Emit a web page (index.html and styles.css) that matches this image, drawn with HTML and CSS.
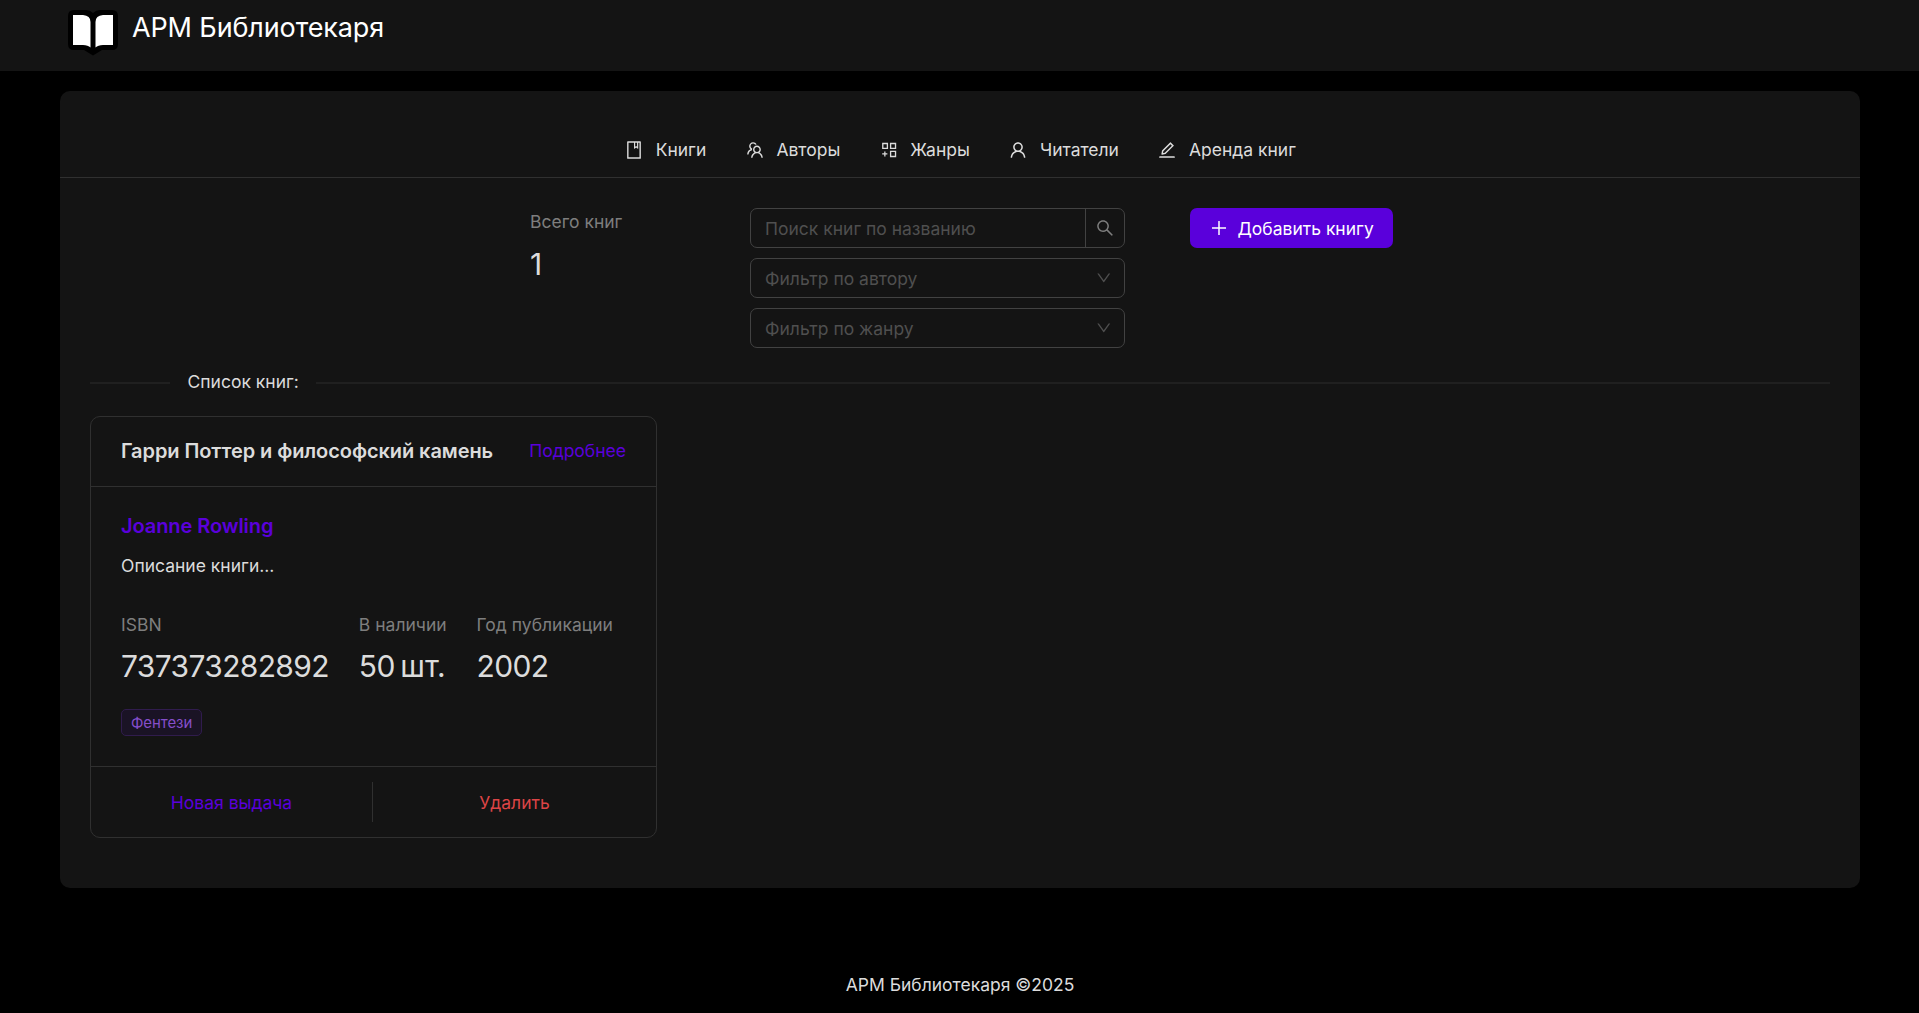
FILE: index.html
```html
<!DOCTYPE html>
<html lang="ru">
<head>
<meta charset="utf-8">
<title>АРМ Библиотекаря</title>
<link rel="stylesheet" href="styles.css">
</head>
<body>
<header class="header">
  <svg class="logo" viewBox="0 0 50 46"><path d="M6 0H18Q22 0 25 3Q28 0 32 0H44Q50 0 50 6V34Q50 40 44 40H34L25 45.500L16 40H6Q0 40 0 34V6Q0 0 6 0Z" fill="#000"/><path d="M5 5H15Q22.500 5.500 22.500 12V37.500Q20 35 15 35H5Z" fill="#fff"/><path d="M45 5H35Q27.500 5.500 27.500 12V37.500Q30 35 35 35H45Z" fill="#fff"/></svg>
  <h1 class="brand">АРМ Библиотекаря</h1>
</header>
<main class="panel">
  <nav class="menu">
    <a class="menu-item"><svg class="icon" viewBox="0 0 1024 1024"><path d="M832 64H192c-17.700 0-32 14.300-32 32v832c0 17.700 14.300 32 32 32h640c17.700 0 32-14.300 32-32V96c0-17.700-14.300-32-32-32zm-260 72h96v209.900L621.500 312 572 347.400V136zm220 752H232V136h280v296.900c0 3.300 1 6.600 3 9.300a15.900 15.900 0 0022.300 3.700l83.800-59.900 81.400 59.400c2.700 2 6 3.100 9.400 3.100 8.800 0 16-7.200 16-16V136h64v752z"/></svg>Книги</a>
    <a class="menu-item"><svg class="icon" viewBox="0 0 1024 1024"><path d="M824.200 699.900a301.550 301.550 0 00-86.400-60.400C783.100 602.800 812 546.800 812 484c0-110.800-92.400-201.700-203.200-200-109.100 1.700-197 90.600-197 200 0 62.800 29 118.800 74.200 155.500a300.950 300.950 0 00-86.400 60.400C345 754.600 314 826.800 312 903.800a8 8 0 008 8.200h56c4.300 0 7.900-3.400 8-7.700 1.900-58 25.400-112.300 66.700-153.500A226.620 226.620 0 01612 684c60.900 0 118.200 23.700 161.300 66.800C814.600 792 838 846.300 840 904.300c.1 4.300 3.700 7.700 8 7.700h56a8 8 0 008-8.200c-2-77-33-149.200-87.800-203.900zM612 612c-34.200 0-66.400-13.300-90.500-37.500a126.860 126.860 0 01-37.500-91.800c.3-32.800 13.400-64.500 36.300-88 24-24.600 56.100-38.300 90.400-38.700 33.900-.3 66.800 12.900 91 36.600 24.800 24.300 38.400 56.800 38.400 91.400 0 34.200-13.300 66.300-37.500 90.500A127.300 127.300 0 01612 612zM361.500 510.400c-.9-8.700-1.400-17.500-1.400-26.400 0-15.900 1.500-31.400 4.300-46.500.7-3.600-1.200-7.300-4.500-8.800-13.600-6.100-26.100-14.500-36.900-25.100a127.540 127.540 0 01-38.700-95.400c.9-32.100 13.800-62.600 36.300-85.600 24.700-25.300 57.900-39.100 93.200-38.700 31.900.3 62.700 12.600 86 34.400 7.900 7.400 14.700 15.600 20.400 24.400 2 3.100 5.900 4.400 9.300 3.200 17.600-6.100 36.200-10.400 55.300-12.400 5.600-.6 8.800-6.600 6.300-11.600-32.500-64.300-98.900-108.700-175.700-109.900-110.900-1.700-203.300 89.200-203.300 199.900 0 62.800 28.900 118.800 74.200 155.500-31.800 14.700-61.100 35-86.500 60.400-54.800 54.700-85.800 126.900-87.800 204a8 8 0 008 8.200h56.100c4.300 0 7.900-3.400 8-7.700 1.900-58 25.400-112.300 66.700-153.500 29.400-29.400 65.400-49.800 104.700-59.700 3.900-1 6.500-4.700 6-8.700z"/></svg>Авторы</a>
    <a class="menu-item"><svg class="icon" viewBox="0 0 1024 1024"><path fill-rule="evenodd" d="M160 144H464V464H160ZM228 212V396H396V212ZM560 144H880V464H560ZM628 212V396H812V212ZM560 544H880V880H560ZM628 612V812H812V612ZM268 584H332V680H428V744H332V848H268V744H164V680H268Z"/></svg>Жанры</a>
    <a class="menu-item"><svg class="icon" viewBox="0 0 1024 1024"><path d="M858.500 763.600a374 374 0 00-80.600-119.500 375.630 375.630 0 00-119.500-80.600c-.4-.2-.8-.3-1.200-.5C719.500 518 760 444.700 760 362c0-137-111-248-248-248S264 225 264 362c0 82.700 40.500 156 102.800 201.100-.4.2-.8.3-1.200.5-44.800 18.900-85 46-119.500 80.600a375.630 375.630 0 00-80.600 119.500A371.700 371.700 0 00136 901.800a8 8 0 008 8.200h60c4.400 0 7.900-3.500 8-7.800 2-77.200 33-149.500 87.800-204.300 56.700-56.700 132-87.900 212.200-87.900s155.500 31.200 212.200 87.900C779 752.700 810 825 812 902.200c.1 4.400 3.600 7.800 8 7.800h60a8 8 0 008-8.200c-1-47.800-10.900-94.300-29.500-138.200zM512 534c-45.900 0-89.100-17.900-121.600-50.400S340 407.900 340 362c0-45.900 17.900-89.100 50.400-121.600S466.100 190 512 190s89.100 17.900 121.600 50.400S684 316.100 684 362c0 45.900-17.900 89.100-50.400 121.600S557.900 534 512 534z"/></svg>Читатели</a>
    <a class="menu-item"><svg class="icon" viewBox="0 0 1024 1024"><path d="M257.700 752c2 0 4-.2 6-.5L431.900 722c2-.4 3.900-1.300 5.300-2.800l423.900-423.900a9.960 9.960 0 000-14.100L694.900 114.900c-1.900-1.900-4.400-2.900-7.100-2.900s-5.200 1-7.100 2.900L256.800 538.800c-1.500 1.500-2.400 3.300-2.800 5.300l-29.500 168.200a33.500 33.500 0 009.400 29.800c6.600 6.400 14.900 9.900 23.800 9.900zm67.400-174.400L687.800 215l73.300 73.300-362.700 362.600-88.900 15.700 15.600-89zM880 836H144c-17.700 0-32 14.300-32 32v36c0 4.400 3.600 8 8 8h784c4.400 0 8-3.600 8-8v-36c0-17.700-14.300-32-32-32z"/></svg>Аренда книг</a>
  </nav>
  <section class="toolbar">
    <div class="stat total"><span class="stat-title">Всего книг</span><span class="stat-value">1</span></div>
    <div class="filters">
      <div class="field"><span class="field-text">Поиск книг по названию</span><span class="search"><svg class="icon" viewBox="0 0 1024 1024"><path d="M909.600 854.500L649.900 594.800C690.200 542.700 712 479 712 412c0-80.200-31.300-155.400-87.900-212.100-56.600-56.700-132-87.900-212.100-87.900s-155.500 31.300-212.100 87.900C143.200 256.500 112 331.800 112 412c0 80.100 31.300 155.500 87.900 212.100C256.500 680.800 331.800 712 412 712c67 0 130.600-21.800 182.700-62l259.700 259.600a8.200 8.200 0 0011.600 0l43.600-43.500a8.200 8.200 0 000-11.600zM570.400 570.400C528 612.700 471.800 636 412 636s-116-23.300-158.400-65.600C211.300 528 188 471.800 188 412s23.300-116.100 65.600-158.400C296 211.300 352.200 188 412 188s116.100 23.200 158.400 65.600S636 352.200 636 412s-23.300 116.100-65.600 158.400z"/></svg></span></div>
      <div class="field"><span class="field-text">Фильтр по автору</span><svg class="arrow" viewBox="0 0 1024 1024"><path d="M884 256h-75c-5.100 0-9.900 2.500-12.900 6.600L512 654.200 227.900 262.600c-3-4.100-7.800-6.600-12.900-6.600h-75c-6.500 0-10.300 7.400-6.500 12.700l352.600 486.100c12.800 17.600 39 17.600 51.700 0l352.600-486.100c3.900-5.300.1-12.700-6.400-12.700z"/></svg></div>
      <div class="field"><span class="field-text">Фильтр по жанру</span><svg class="arrow" viewBox="0 0 1024 1024"><path d="M884 256h-75c-5.100 0-9.900 2.500-12.900 6.600L512 654.200 227.900 262.600c-3-4.100-7.800-6.600-12.900-6.600h-75c-6.500 0-10.300 7.400-6.500 12.700l352.600 486.100c12.800 17.600 39 17.600 51.700 0l352.600-486.100c3.900-5.300.1-12.700-6.400-12.700z"/></svg></div>
    </div>
    <button class="add"><svg class="icon" viewBox="0 0 1024 1024"><path d="M482 152h60q8 0 8 8v314h314q8 0 8 8v60q0 8-8 8H550v314q0 8-8 8h-60q-8 0-8-8V550H160q-8 0-8-8v-60q0-8 8-8h314V160q0-8 8-8z"/></svg><span class="add-text">Добавить книгу</span></button>
  </section>
  <div class="divider">Список книг:</div>
  <article class="card">
    <div class="card-head"><h2 class="card-title">Гарри Поттер и философский камень</h2><a class="link">Подробнее</a></div>
    <div class="card-body">
      <h3 class="author">Joanne Rowling</h3>
      <p class="description">Описание книги...</p>
      <div class="stats">
        <div class="stat"><span class="stat-title">ISBN</span><span class="stat-value">737373282892</span></div>
        <div class="stat"><span class="stat-title">В наличии</span><span class="stat-value">50<span class="suffix">шт.</span></span></div>
        <div class="stat"><span class="stat-title">Год публикации</span><span class="stat-value">2002</span></div>
      </div>
      <span class="tag">Фентези</span>
    </div>
    <div class="actions"><a class="action link">Новая выдача</a><a class="action danger">Удалить</a></div>
  </article>
</main>
<footer class="footer">АРМ Библиотекаря ©2025</footer>
</body>
</html>
```
FILE: styles.css
```css
* { box-sizing: border-box; }
body {
  margin: 0;
  height: 1013px;
  overflow: hidden;
  background: #000;
  color: #dcdcdc;
  font: 17.5px/28px Inter, sans-serif;
}
h1, h2, h3, p { margin: 0; }
svg { display: block; flex: none; fill: currentColor; }
.header {
  display: flex;
  height: 71px;
  padding: 9px 0 0 68px;
  background: #141414;
  color: #fff;
}
.logo { width: 50px; height: 46px; margin-top: 0.5px; }
.brand { margin-left: 14px; font-size: 27px; line-height: 37px; font-weight: 400; letter-spacing: -0.13px; }
.panel {
  width: 1800px;
  height: 797px;
  margin: 20px 0 0 60px;
  background: #141414;
  border-radius: 10px;
}
.menu {
  display: flex;
  justify-content: center;
  gap: 38.5px;
  height: 87px;
  padding-top: 45px;
  border-bottom: 1px solid #303030;
}
.menu-item { display: flex; align-items: center; gap: 11.5px; height: 28px; }
.icon { width: 20px; height: 20px; }
.toolbar { display: flex; padding: 30px 0 0 470px; height: 170px; align-items: flex-start; }
.stat { display: flex; flex-direction: column; gap: 5px; white-space: nowrap; }
.total { width: 220px; }
.stat-title { color: #7e7e7e; }
.stat-value { font-size: 30px; line-height: 46px; letter-spacing: -0.65px; }
.suffix { margin-left: 5.5px; letter-spacing: 0; }
.filters { display: grid; gap: 10px; width: 375px; }
.field {
  display: flex;
  align-items: center;
  height: 40px;
  padding-left: 14px;
  border: 1px solid #424242;
  border-radius: 7px;
  color: #4f4f4f;
}
.field-text { flex: 1; padding-top: 2px; }
.search {
  display: flex;
  align-items: center;
  justify-content: center;
  width: 39px;
  height: 38px;
  border-left: 1px solid #424242;
  color: #7e7e7e;
}
.arrow { width: 17.5px; height: 17.5px; margin-right: 12px; }
.add {
  display: flex;
  align-items: center;
  gap: 9px;
  height: 40px;
  margin-left: 65px;
  padding: 0 19.5px 0 18.5px;
  border: 0;
  border-radius: 7px;
  background: #5a00db;
  color: #fff;
  font: inherit;
}
.add-text { padding-top: 2px; }
.divider { display: flex; align-items: center; gap: 17.5px; margin: 20px 30px 0; height: 28px; }
.divider::before, .divider::after { content: ""; height: 2px; margin-top: 2px; background: #202020; }
.divider::before { width: 80px; }
.divider::after { flex: 1; }
.card { width: 567px; height: 422px; margin: 20px 0 0 30px; border: 1px solid #303030; border-radius: 10px; }
.card-head {
  display: flex;
  align-items: center;
  justify-content: space-between;
  height: 70px;
  padding: 0 30px 2px;
  border-bottom: 1px solid #303030;
}
.card-title, .author { font-size: 20px; line-height: 30px; font-weight: 600; letter-spacing: -0.08px; }
.link, .author { color: #5a00db; }
.card-body { height: 279px; padding: 24px 30px 0; }
.description { margin-top: 11px; }
.stats { display: flex; gap: 30px; margin-top: 31px; }
.card .stat { gap: 4px; }
.tag {
  display: inline-block;
  margin-top: 20px;
  padding: 0 9px;
  border: 1px solid #301c4d;
  border-radius: 5px;
  background: #1a1325;
  color: #854eca;
  font-size: 15px;
  line-height: 25px;
  letter-spacing: -0.08px;
}
.actions { display: flex; height: 71px; padding-top: 15px; border-top: 1px solid #303030; }
.action { width: 283px; height: 40px; line-height: 42px; text-align: center; }
.action:first-child { width: 282px; border-right: 1px solid #303030; }
.danger { color: #dc4446; }
.footer { margin-top: 83px; padding-left: 1px; text-align: center; }
```
